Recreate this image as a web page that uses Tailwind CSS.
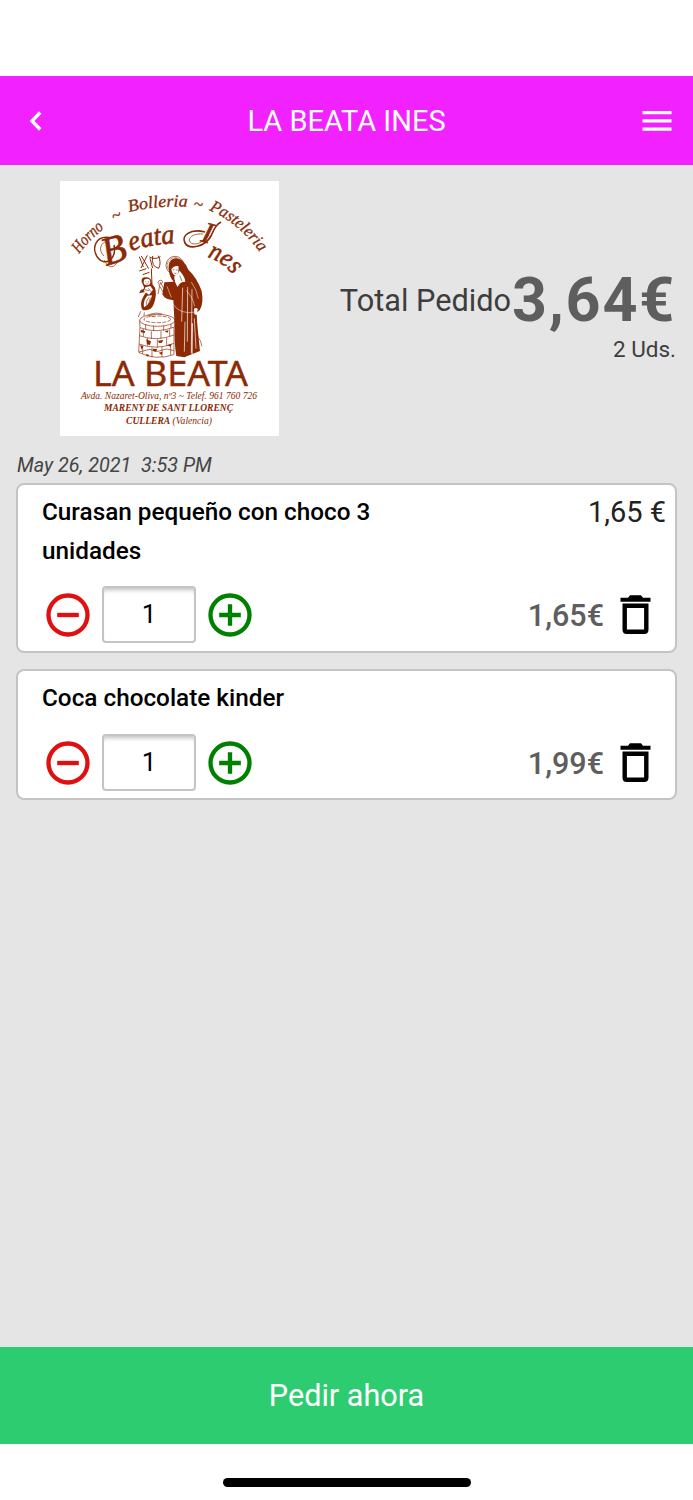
<!DOCTYPE html>
<html lang="es">
<head>
    <meta charset="UTF-8">
    <meta content="width=device-width, initial-scale=1.0" name="viewport">
    <title>La Beata Ines</title>
    <script src="https://cdn.jsdelivr.net/npm/@tailwindcss/browser@4"></script>
</head>
<body class="bg-white font-[Roboto,sans-serif]">
<div class="flex flex-col w-[693px] h-[1500px] pt-[76.4px] overflow-hidden">
    <header class="flex items-center justify-between h-[89px] shrink-0 bg-[#f221ff] pl-[29px] pr-[21px] text-white">
        <button class="w-[30px]" aria-label="Volver">
            <svg class="w-[13px] h-[20px]" viewBox="0 0 13 20" fill="none" stroke="currentColor" stroke-width="3.4"><path d="M11.200 1.500 3 10l8.200 8.500"/></svg>
        </button>
        <h1 class="text-[29px] leading-none pr-[8px] pt-[2px]">LA BEATA INES</h1>
        <button class="w-[30px]" aria-label="Menú">
            <svg class="w-[30px] h-[20px]" viewBox="0 0 30 20" fill="currentColor"><path d="M.500 0h29v3.300H.500zM.500 8.300h29v3.300H.500zM.500 16.500h29v3.300H.500z"/></svg>
        </button>
    </header>

    <main class="flex flex-col flex-1 bg-[#e5e5e5] px-[16px] pt-[16px]">
        <section class="flex justify-between pl-[44px]">
            <svg class="w-[219px] h-[255px] bg-white" viewBox="0 0 219 255" fill="#8b2a05" font-family="Liberation Serif, serif" font-style="italic">
                <defs>
                    <path id="horno" d="M19 73Q33 54 54 41"/>
                    <path id="bolleria" d="M69 31Q98 24 129 26"/>
                    <path id="pasteleria" d="M149 29Q181 43 203 76"/>
                    <path id="eata" d="M71 70Q92 63 118 62"/>
                    <path id="nes" d="M147 76Q163 81 174 95"/>
                </defs>
                <g font-size="17" stroke="#8b2a05" stroke-width=".300">
                    <text textLength="36" lengthAdjust="spacingAndGlyphs"><textPath href="#horno">Horno</textPath></text>
                    <text x="54" y="41" transform="rotate(-22 54 41)">~</text>
                    <text textLength="59" lengthAdjust="spacingAndGlyphs"><textPath href="#bolleria">Bolleria</textPath></text>
                    <text x="133" y="28" transform="rotate(8 133 28)">~</text>
                    <text textLength="67" lengthAdjust="spacingAndGlyphs"><textPath href="#pasteleria">Pasteleria</textPath></text>
                </g>
                <g stroke="#8b2a05" stroke-width=".600">
                    <text x="46" y="85" font-size="40" transform="rotate(-18 46 85)">B</text>
                    <text font-size="28" textLength="45" lengthAdjust="spacingAndGlyphs"><textPath href="#eata">eata</textPath></text>
                    <text x="140" y="60" font-size="30" transform="rotate(16 140 60)">I</text>
                    <text font-size="26" textLength="32" lengthAdjust="spacingAndGlyphs"><textPath href="#nes">nes</textPath></text>
                </g>
                <!-- swashes of the two capitals -->
                <g fill="none" stroke="#8b2a05">
                    <path d="M52 57C35 53 31 68 38 77C45 86 57 78 54 64" stroke-width="1.500"/>
                    <path d="M49 60C40 60 38 70 44 75M44 79Q50 91 57 82" stroke-width=".700"/>
                    <path d="M145 51C130 47 121 55 125 62C129 69 145 66 151 55C155 46 157 43 161 41" stroke-width="1.700"/>
                    <path d="M143 53C134 52 127 57 130 61C134 66 144 61 149 54" stroke-width=".700"/>
                </g>
                <!-- saint, child and well -->
                <g transform="translate(65 64) scale(.3333)">
                    <circle cx="150" cy="61" r="27" fill="none" stroke="#8b2a05" stroke-width="2"/>
                    <circle cx="150" cy="61" r="23" fill="none" stroke="#8b2a05" stroke-width="3" stroke-dasharray="2 2"/>
                    <path d="M132 78Q126 42 154 40Q177 42 190 74Q216 98 230 138Q237 175 224 196L214 203Q219 265 225 318L178 337L154 333Q147 292 149 240L145 166Q120 164 112 148L118 112L146 110Q134 98 132 78Z"/>
                    <path d="M139 73Q147 61 160 63Q163 82 154 92Q142 92 139 73Z" fill="#fff"/>
                    <path d="M148 94Q160 87 164 77Q181 97 181 110Q164 110 158 126Q147 110 148 94Z" fill="#fff"/>
                    <path d="M143 74h5M152 75h6M148 85h6M164 92L171 108" stroke="#8b2a05" stroke-width="2"/>
                    <path d="M173 128L170 230M188 126L187 290M201 132L199 323M180 230L178 320M208 220L213 311" stroke="#fff" stroke-width="2" fill="none"/>
                    <path d="M202 235L201 327" stroke="#fff" stroke-width="3"/>
                    <path d="M142 174Q163 211 212 201M184 137Q204 157 209 184M126 124L139 157M199 111Q216 135 220 161" stroke="#fff" stroke-width="1.500" fill="none"/>
                    <path d="M207 191q8-5 11 2l-3 17-7-2z" fill="#fff"/>
                    <path d="M214 210Q212 255 219 277Q228 285 231 304M119 135L105 111M117 145L101 119M99 112q5-11 14-3q-1 9-10 9zM104 122l-5 25" fill="none" stroke="#8b2a05" stroke-width="2"/>
                    <path d="M43 35l12 31M67 31L48 69M49 33l22 38M75 40l8 29M83 33Q78 65 101 70Q110 53 100 32M73 36Q91 45 106 35M79 70L81 118M43 78l21-7M53 89l20-7" fill="none" stroke="#8b2a05" stroke-width="3"/>
                    <path d="M50 111Q47 95 65 97Q80 98 81 116L90 128Q97 148 86 178Q78 200 53 195Q44 182 51 163Q58 148 64 140L42 145L48 134Q58 134 57 126Z"/>
                    <circle cx="66" cy="111" r="10" fill="#fff"/>
                    <path d="M61 127L76 123L84 134L72 149L57 139ZM67 152Q53 169 57 187Q76 178 81 151Z" fill="#fff"/>
                    <path d="M61 110h3M69 111h3M64 117h6M70 130l8 10M72 157Q60 171 64 180M77 158l-7 20M60 134l12 3" fill="none" stroke="#8b2a05" stroke-width="2"/>
                    <path d="M47 199L40 216M58 202L57 213M74 208Q92 201 112 207M68 209L89 216" stroke="#8b2a05" stroke-width="2" fill="none"/>
                    <g fill="none" stroke="#8b2a05" stroke-width="2">
                        <ellipse cx="97" cy="226" rx="53" ry="18"/>
                        <ellipse cx="97" cy="223" rx="40" ry="10" stroke-dasharray="12 4"/>
                        <path d="M44 226L45 248Q94 267 149 246L150 228M45 248L41 322Q91 348 147 329L147 247M43 272Q94 291 147 270M42 297Q94 317 147 295M42 321l33-8 20 7 29-8 23 5"/>
                        <path d="M62 237v17M86 242v16M116 241v17M138 237v13M55 252v22M79 259v23M108 258v23M134 253v21M67 278v25M97 283v25M125 278v24M53 301v25M81 307v30M111 306v30M137 300v30"/>
                    </g>
                    <path d="M48 254l13 5-2 5-11-2zM64 283l14 6-3 11-9-2zM99 287l16-2-4 8-9 1zM119 258l12-2-4 8zM45 300l10 4-5 10zM84 311l13 1-4 8-9-2zM126 301l14-5-3 9zM62 326l11 4-5 5zM101 323l12-3-3 10z"/>
                </g>
                <text x="33" y="205" font-family="Noto Sans, sans-serif" font-style="normal" font-size="34.500" stroke="#8b2a05" stroke-width=".400" textLength="155" lengthAdjust="spacingAndGlyphs">LA BEATA</text>
                <text x="21" y="218" font-size="9.500" textLength="176" lengthAdjust="spacingAndGlyphs">Avda. Nazaret-Oliva, nº3 ~ Telef. 961 760 726</text>
                <text x="44" y="230" font-size="9.500" font-weight="bold" textLength="129" lengthAdjust="spacingAndGlyphs">MARENY DE SANT LLORENÇ</text>
                <text x="66" y="242.500" font-size="9.500" textLength="86" lengthAdjust="spacingAndGlyphs"><tspan font-weight="bold">CULLERA</tspan> (Valencia)</text>
            </svg>
            <div class="flex flex-col items-end pt-[88px] text-[#3d3d3d]">
                <div class="flex items-center h-[62px]">
                    <span class="text-[30.700px] leading-none pt-[1px]">Total Pedido</span>
                    <span class="text-[61px] leading-none font-bold text-[#5e5e5e] tracking-[1.800px] pl-[1px] pr-[1px]">3,64€</span>
                </div>
                <span class="text-[22.500px] leading-[36px] pr-px">2 Uds.</span>
            </div>
        </section>

        <p class="mt-[14px] h-[33px] pl-[1px] text-[19.800px] leading-[31px] italic text-[#444] whitespace-pre">May 26, 2021  3:53 PM</p>

        <article class="w-[661px] h-[170px] rounded-lg border-2 border-[#c4c4c4] bg-white pl-[24px] pt-[7px]">
            <div class="flex justify-between pr-[9px] leading-[39px]">
                <h2 class="w-[350px] text-[24.300px] font-medium text-black">Curasan pequeño con choco 3 unidades</h2>
                <span class="text-[29px] text-[#222] pt-[1px]">1,65 €</span>
            </div>
            <div class="flex items-center mt-[16px] h-[57px]">
                <svg class="size-[52px]" viewBox="0 0 24 24" fill="none" stroke="#e01010" stroke-width="2"><circle cx="12" cy="12" r="9"/><path d="M7 12h10"/></svg>
                <div class="flex items-center justify-center w-[94px] h-[57px] mx-[8px] rounded-[4px] border-2 border-[#c4c4c4] text-[26px] text-black pb-[1px] shadow-[inset_0_5px_4px_-3px_rgba(0,0,0,0.25)]">1</div>
                <svg class="size-[52px]" viewBox="0 0 24 24" fill="none" stroke="#008000" stroke-width="2"><circle cx="12" cy="12" r="9"/><path d="M7 12h10M12 7v10"/></svg>
                <span class="ml-auto pt-[2px] text-[30.500px] leading-none font-medium text-[#5e5e5e]">1,65€</span>
                <svg class="w-[31px] h-[39px] ml-[16px] mr-[24px]" viewBox="0 0 31 39"><path d="M.500 2.700h7.500L10 .200h11l2 2.500h7.500v4H.500z"/><path d="M4.700 10.700h21.600v24q0 2-2 2H6.700q-2 0-2-2z" fill="none" stroke="#000" stroke-width="4.400"/></svg>
            </div>
        </article>

        <article class="w-[661px] h-[131px] mt-[16px] rounded-lg border-2 border-[#c4c4c4] bg-white pl-[24px] pt-[7px]">
            <h2 class="text-[24.300px] leading-[39px] font-medium text-black">Coca chocolate kinder</h2>
            <div class="flex items-center mt-[17px] h-[57px]">
                <svg class="size-[52px]" viewBox="0 0 24 24" fill="none" stroke="#e01010" stroke-width="2"><circle cx="12" cy="12" r="9"/><path d="M7 12h10"/></svg>
                <div class="flex items-center justify-center w-[94px] h-[57px] mx-[8px] rounded-[4px] border-2 border-[#c4c4c4] text-[26px] text-black pb-[1px] shadow-[inset_0_5px_4px_-3px_rgba(0,0,0,0.25)]">1</div>
                <svg class="size-[52px]" viewBox="0 0 24 24" fill="none" stroke="#008000" stroke-width="2"><circle cx="12" cy="12" r="9"/><path d="M7 12h10M12 7v10"/></svg>
                <span class="ml-auto pt-[2px] text-[30.500px] leading-none font-medium text-[#5e5e5e]">1,99€</span>
                <svg class="w-[31px] h-[39px] ml-[16px] mr-[24px]" viewBox="0 0 31 39"><path d="M.500 2.700h7.500L10 .200h11l2 2.500h7.500v4H.500z"/><path d="M4.700 10.700h21.600v24q0 2-2 2H6.700q-2 0-2-2z" fill="none" stroke="#000" stroke-width="4.400"/></svg>
            </div>
        </article>
    </main>

    <button class="h-[97px] shrink-0 bg-[#2ecc71] text-[30.600px] text-white pt-[1px]">Pedir ahora</button>
    <footer class="flex justify-center h-[55.800px] shrink-0 pt-[34px]">
        <div class="w-[248px] h-[8.500px] rounded-full bg-black"></div>
    </footer>
</div>
</body>
</html>
